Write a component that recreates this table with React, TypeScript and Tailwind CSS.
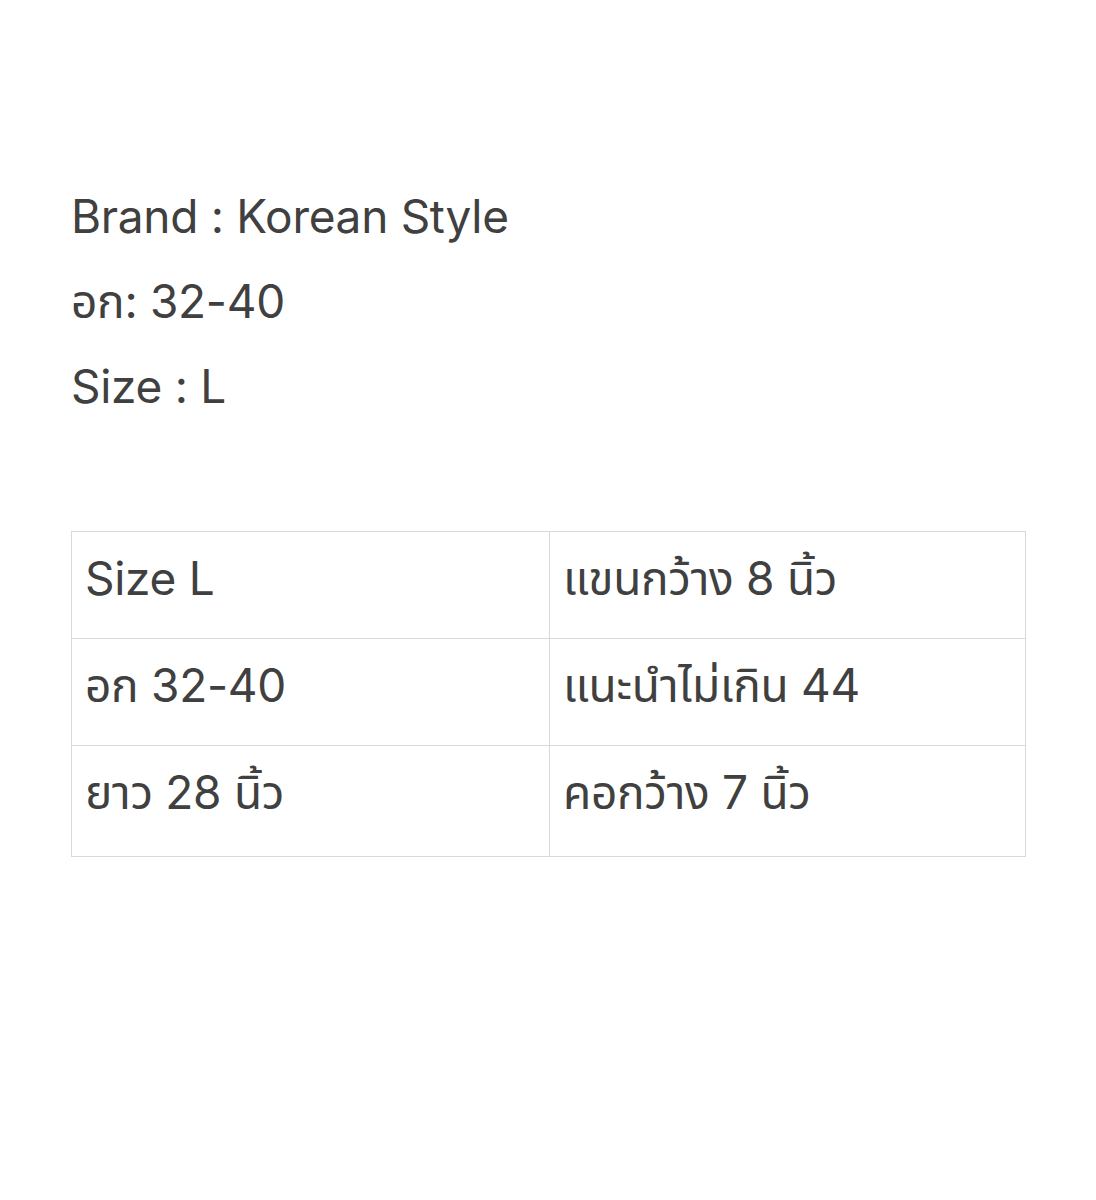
import React from 'react';

const rows: [string, string][] = [
  ['Size L', 'แขนกว้าง 8 นิ้ว'],
  ['อก 32-40', 'แนะนำไม่เกิน 44'],
  ['ยาว 28 นิ้ว', 'คอกว้าง 7 นิ้ว'],
];

export default function App() {
  return (
    <div
      className="min-h-[1200px] w-[1096px] bg-white text-[#404040]"
      style={{ fontFamily: 'Inter, "Noto Sans", "Noto Sans Thai", "DejaVu Sans", sans-serif' }}
    >
      <div className="px-[71px] pt-[174px]">
        <div className="text-[46px] leading-[85px] tracking-[-0.3px]">
          <p>Brand : Korean Style</p>
          <p>อก: 32-40</p>
          <p>Size : L</p>
        </div>
        <table className="mt-[102px] w-[955px] border-collapse text-[46px] tracking-[-0.3px]">
          <tbody>
            {rows.map(([a, b], i) => (
              <tr key={i} className={i === 2 ? 'h-[111px]' : 'h-[107px]'}>
                <td className="w-[478px] border border-[#d9d9d9] px-[13px] align-top pt-[18px] leading-[56px]">{a}</td>
                <td className="border border-[#d9d9d9] px-[13px] align-top pt-[18px] leading-[56px]">{b}</td>
              </tr>
            ))}
          </tbody>
        </table>
      </div>
    </div>
  );
}
